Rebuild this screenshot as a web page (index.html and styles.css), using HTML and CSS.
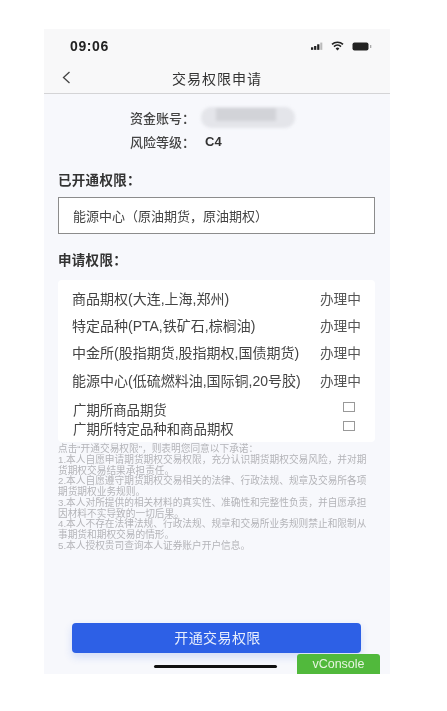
FILE: index.html
```html
<!DOCTYPE html>
<html lang="zh">
<head>
<meta charset="utf-8">
<title>交易权限申请</title>
<link rel="stylesheet" href="styles.css">
</head>
<body>
<div class="phone">
  <div class="status">
    <span class="time">09:06</span>
    <span class="status-icons">
      <svg width="12" height="8" viewBox="0 0 14 9"><rect x="0" y="6" width="2.6" height="3" fill="#222"/><rect x="3.6" y="4.5" width="2.6" height="4.5" fill="#222"/><rect x="7.2" y="2.5" width="2.6" height="6.5" fill="#222"/><rect x="10.8" y="0.5" width="2.4" height="8.5" fill="#bbb"/></svg>
      <svg width="13" height="10" viewBox="0 0 13 10"><path d="M1 3.4a8 8 0 0 1 11 0M3 5.6a5 5 0 0 1 7 0" fill="none" stroke="#222" stroke-width="1.6"/><path d="M6.5 9.6 4.6 7.5a2.8 2.8 0 0 1 3.8 0z" fill="#222"/></svg>
      <svg width="20" height="9" viewBox="0 0 20 9"><rect x="0.5" y="0.5" width="16" height="8" rx="2" fill="#222"/><rect x="18" y="3" width="1.3" height="3" fill="#aaa"/></svg>
    </span>
  </div>
  <div class="nav">
    <svg class="back" width="9" height="13" viewBox="0 0 9 13"><path d="M7.5 1 1.5 6.5l6 5.5" fill="none" stroke="#444" stroke-width="1.3"/></svg>
    <span class="nav-title">交易权限申请</span>
  </div>
  <main class="content">
    <div class="account">
      <div class="acc-row"><span>资金账号&#xFF1A;</span><span class="mask"><i></i></span></div>
      <div class="acc-row risk"><span>风险等级&#xFF1A;</span><b>C4</b></div>
    </div>
    <h2 class="sec sec-open">已开通权限&#xFF1A;</h2>
    <div class="opened">能源中心&#xFF08;原油期货&#xFF0C;原油期权&#xFF09;</div>
    <h2 class="sec sec-apply">申请权限&#xFF1A;</h2>
    <div class="card">
      <div class="row"><span>商品期权(大连,上海,郑州)</span><span class="state">办理中</span></div>
      <div class="row"><span>特定品种(PTA,铁矿石,棕榈油)</span><span class="state">办理中</span></div>
      <div class="row"><span>中金所(股指期货,股指期权,国债期货)</span><span class="state">办理中</span></div>
      <div class="row"><span>能源中心(低硫燃料油,国际铜,20号胶)</span><span class="state">办理中</span></div>
      <div class="check first"><span>广期所商品期货</span><i class="box"></i></div>
      <div class="check"><span>广期所特定品种和商品期权</span><i class="box"></i></div>
    </div>
    <p class="legal">点击“开通交易权限”&#xFF0C;则表明您同意以下承诺&#xFF1A;<br>1.本人自愿申请期货期权交易权限&#xFF0C;充分认识期货期权交易风险&#xFF0C;并对期货期权交易结果承担责任&#x3002;<br>2.本人自愿遵守期货期权交易相关的法律&#x3001;行政法规&#x3001;规章及交易所各项期货期权业务规则&#x3002;<br>3.本人对所提供的相关材料的真实性&#x3001;准确性和完整性负责&#xFF0C;并自愿承担因材料不实导致的一切后果&#x3002;<br>4.本人不存在法律法规&#x3001;行政法规&#x3001;规章和交易所业务规则禁止和限制从事期货和期权交易的情形&#x3002;<br>5.本人授权贵司查询本人证券账户开户信息&#x3002;</p>
    <div class="spacer"></div>
    <button class="submit">开通交易权限</button>
    <div class="home-wrap"><span class="home"></span><span class="vconsole">vConsole</span></div>
  </main>
</div>
</body>
</html>
```
FILE: styles.css
```css
* { box-sizing: border-box; }
html, body { margin: 0; background: #fff; }
body { height: 711px; overflow: hidden; font-family: "Liberation Sans", "Noto Sans CJK SC", sans-serif; color: #333; }
.phone { width: 346px; height: 645px; margin: 29px 0 0 44px; display: flex; flex-direction: column; background: #f7f8fc; filter: blur(0.45px); }
.status { height: 34px; flex: none; display: flex; justify-content: space-between; align-items: center; padding: 0 18px 0 26px; background: #f8f8f9; }
.time { font-size: 14px; font-weight: 700; color: #222; letter-spacing: 0.6px; }
.status-icons { display: flex; align-items: center; gap: 8px; }
.nav { height: 31px; flex: none; display: flex; align-items: center; justify-content: center; position: relative; background: #f8f8f9; border-bottom: 1px solid #d4d4d6; padding-bottom: 1px; }
.back { position: absolute; left: 18px; top: 8px; }
.nav-title { font-size: 14px; color: #333; letter-spacing: 1px; }
.content { flex: 1; display: flex; flex-direction: column; min-height: 0; padding: 0 15px 0 14px; }
.account { padding: 12px 0 0 72px; }
.acc-row { display: flex; align-items: center; height: 22px; font-size: 13px; color: #444; font-weight: 500; }
.acc-row.risk { margin-top: 2px; }
.acc-row b { margin-left: 10px; font-size: 13px; color: #333; }
.mask { width: 94px; height: 21px; margin-left: 6px; border-radius: 10px; background: #e4e5ea; overflow: hidden; display: block; filter: blur(1.5px); }
.mask i { display: block; width: 60px; height: 13px; margin: 1px 0 0 15px; background: #d2d3d8; }
.sec { margin: 0; font-size: 13.5px; font-weight: 700; color: #333; letter-spacing: 0.3px; line-height: 18px; }
.sec-open { margin-top: 20px; }
.opened { margin-top: 7px; height: 37px; border: 1px solid #8c8c8c; background: #fff; display: flex; align-items: center; padding-left: 14px; font-size: 13px; color: #444; }
.sec-apply { margin-top: 18px; }
.card { margin-top: 10px; height: 162px; padding: 4px 14px 0; background: #fff; border-radius: 4px; font-size: 14px; color: #444; }
.row { height: 27.3px; display: flex; justify-content: space-between; align-items: center; white-space: nowrap; }
.state { font-size: 13.7px; color: #555; }
.check { height: 19px; display: flex; justify-content: space-between; align-items: center; font-size: 13.4px; padding-right: 6px; padding-left: 1px; }
.check.first { margin-top: 6px; }
.box { width: 12px; height: 10px; border: 1px solid #999; display: block; margin-top: -3px; }
.legal { margin: 0; padding-top: 2px; padding-right: 1px; font-size: 9.7px; line-height: 10.75px; color: #b4b4b8; height: 117px; }
.spacer { flex: 1; }
.submit { flex: none; align-self: center; width: 289px; height: 30px; margin-left: -1px; padding: 0 0 2px 3px; border: 0; border-radius: 4px; background: #2d60e6; color: #e8eefc; font: 14px "Liberation Sans", "Noto Sans CJK SC", sans-serif; letter-spacing: 0.4px; box-shadow: 0 4px 8px rgba(45, 96, 230, 0.18); }
.home-wrap { flex: none; height: 21px; position: relative; display: flex; justify-content: center; align-items: flex-start; padding-top: 12px; }
.home { width: 123px; height: 3px; border-radius: 2px; background: #111; margin-left: -3px; }
.vconsole { position: absolute; left: 239px; top: 1px; width: 83px; height: 20px; border-radius: 3px 3px 0 0; background: #51b93c; color: #e6f5e0; font-size: 12.5px; display: flex; align-items: center; justify-content: center; }
```
